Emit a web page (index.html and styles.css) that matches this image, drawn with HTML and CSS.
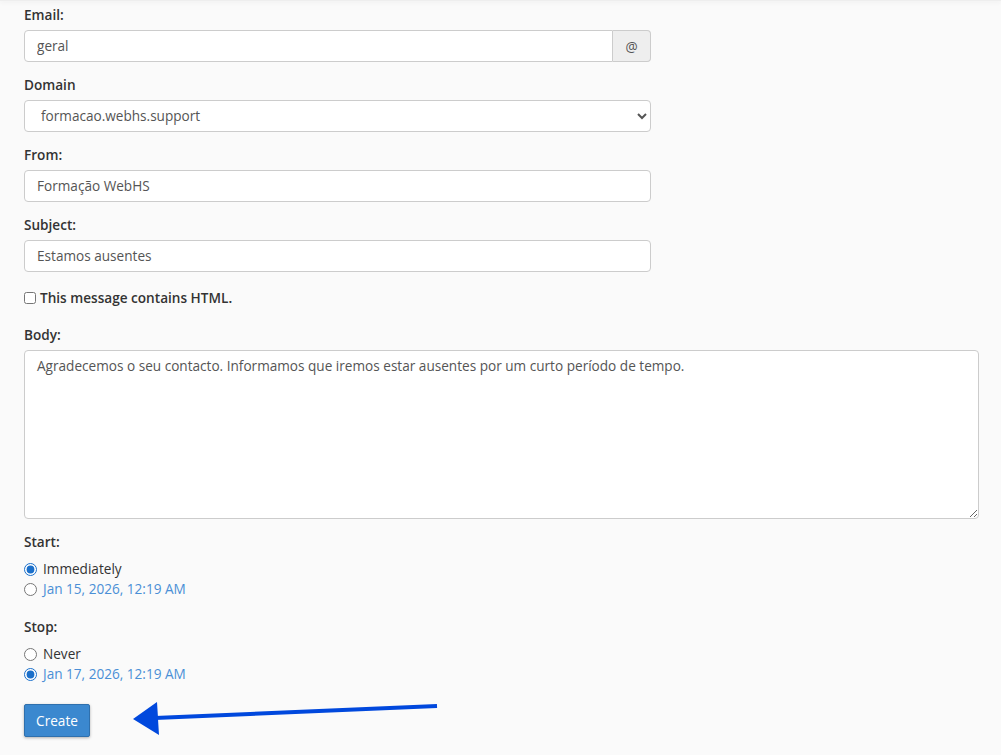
FILE: index.html
```html
<!DOCTYPE html>
<html lang="pt">
<head>
<meta charset="utf-8">
<title>Autoresponder</title>
<link rel="stylesheet" href="styles.css">
</head>
<body>
<div class="topshade"></div>
<form class="form">
  <div class="group">
    <label class="lbl" for="email">Email:</label>
    <div class="input-group">
      <input id="email" class="ctrl ctrl-left" type="text" value="geral">
      <span class="addon">@</span>
    </div>
  </div>
  <div class="group">
    <label class="lbl" for="domain">Domain</label>
    <select id="domain" class="ctrl sel">
      <option>formacao.webhs.support</option>
    </select>
  </div>
  <div class="group">
    <label class="lbl" for="from">From:</label>
    <input id="from" class="ctrl" type="text" value="Formação WebHS">
  </div>
  <div class="group">
    <label class="lbl" for="subject">Subject:</label>
    <input id="subject" class="ctrl" type="text" value="Estamos ausentes">
  </div>
  <div class="check">
    <input id="html" type="checkbox" class="cb">
    <label for="html" class="cb-lbl">This message contains HTML.</label>
  </div>
  <div class="group">
    <label class="lbl" for="body">Body:</label>
    <textarea id="body" class="ctrl area">Agradecemos o seu contacto. Informamos que iremos estar ausentes por um curto período de tempo.</textarea>
  </div>
  <div class="group radios-group">
    <div class="lbl">Start:</div>
    <div class="radio"><input type="radio" name="start" checked><span>Immediately</span></div>
    <div class="radio"><input type="radio" name="start"><span class="date">Jan 15, 2026, 12:19 AM</span></div>
  </div>
  <div class="group radios-group stop">
    <div class="lbl">Stop:</div>
    <div class="radio"><input type="radio" name="stop"><span>Never</span></div>
    <div class="radio"><input type="radio" name="stop" checked><span class="date">Jan 17, 2026, 12:19 AM</span></div>
  </div>
  <div class="actions">
    <button type="button" class="btn">Create</button>
  </div>
</form>
<svg class="arrow" width="310" height="40" viewBox="0 0 310 40">
  <line x1="304" y1="6" x2="22" y2="18" stroke="#0048dd" stroke-width="4" stroke-linecap="butt"/>
  <polygon points="0,19 24,2 26,35" fill="#0048dd"/>
</svg>
</body>
</html>
```

FILE: styles.css
```css
html, body {
  margin: 0;
  padding: 0;
}
body {
  background: #fafafa;
  font-family: "Open Sans", "Liberation Sans", sans-serif;
  font-size: 13.6px;
  color: #333;
  position: relative;
  min-height: 755px;
}
.topshade {
  height: 1px;
  background: #eee;
  box-shadow: 0 1px 4px rgba(0, 0, 0, 0.12);
}
.form {
  padding: 4px 23px 0 24px;
}
.group {
  margin-bottom: 13px;
}
.lbl {
  display: block;
  font-weight: 600;
  line-height: 20px;
  margin-bottom: 5px;
  color: #333;
}
.ctrl {
  box-sizing: border-box;
  display: block;
  width: 627px;
  height: 32px;
  margin: 0;
  padding: 0 12px 1px;
  border: 1px solid #ccc;
  border-radius: 4px;
  background: #fff;
  font-family: inherit;
  font-size: 13.6px;
  color: #555;
  outline: none;
}
.input-group {
  display: flex;
  width: 627px;
}
.ctrl-left {
  flex: 1;
  width: auto;
  border-radius: 4px 0 0 4px;
}
.addon {
  box-sizing: border-box;
  width: 38px;
  height: 32px;
  border: 1px solid #ccc;
  border-left: 0;
  border-radius: 0 4px 4px 0;
  background: #eee;
  color: #555;
  display: flex;
  align-items: center;
  justify-content: center;
  font-size: 13.6px;
}
.sel {
  padding: 0 8px 1px 12px;
}
.check {
  display: flex;
  align-items: center;
  line-height: 20px;
  margin-top: 16px;
  margin-bottom: 17px;
}
.cb {
  margin: 0 4px 0 0;
  width: 12px;
  height: 12px;
}
.cb-lbl {
  font-weight: 600;
}
.area {
  width: 955px;
  height: 169px;
  padding: 5px 12px;
  line-height: 20px;
  resize: vertical;
}
.radios-group {
  margin-top: 13px;
}
.radios-group .lbl {
  margin-bottom: 7px;
}
.radio {
  display: flex;
  align-items: center;
  line-height: 19.5px;
}
.radio input {
  margin: 2px 6px 0 0;
  width: 13px;
  height: 13px;
  accent-color: #1a6fca;
}
.date {
  color: #4a8fd6;
}
.stop {
  margin-top: 19px;
}
.actions {
  margin-top: 21px;
}
.btn {
  box-sizing: border-box;
  height: 33px;
  width: 66px;
  padding: 0;
  border: 1px solid #2f70ad;
  border-radius: 2px;
  background: #3b88cf;
  color: #fff;
  font-family: inherit;
  font-size: 13.6px;
  box-shadow: 0 1px 3px rgba(0, 0, 0, 0.3);
}
.arrow {
  position: absolute;
  left: 133px;
  top: 700px;
}
```
